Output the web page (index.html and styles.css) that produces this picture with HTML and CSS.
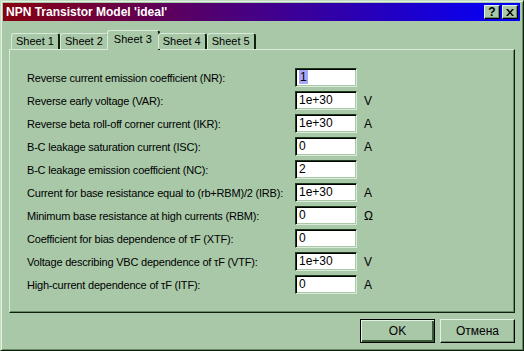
FILE: index.html
```html
<!DOCTYPE html>
<html lang="en">
<head>
    <meta charset="UTF-8">
    <title>NPN Transistor Model 'ideal'</title>
    <link rel="stylesheet" href="styles.css">
</head>
<body>
    <div class="window">
        <div class="titlebar">
            <span class="title">NPN Transistor Model 'ideal'</span>
            <div class="caption-btns">
                <span class="cbtn">?</span>
                <span class="cbtn">
                    <svg width="8" height="7" viewBox="0 0 8 7"><path d="M0 0h2l2 2.5L6 0h2L5 3.5 8 7H6L4 4.5 2 7H0l3-3.5z" fill="#000"/></svg>
                </span>
            </div>
        </div>

        <div class="content">
            <div class="tabs">
                <div class="tab">Sheet 1</div>
                <div class="tab">Sheet 2</div>
                <div class="tab active">Sheet 3</div>
                <div class="tab">Sheet 4</div>
                <div class="tab">Sheet 5</div>
            </div>

            <div class="panel">
                <div class="form">
                    <label>Reverse current emission coefficient (NR):</label>
                    <div class="field"><span class="sel">1</span></div>
                    <span class="unit"></span>

                    <label>Reverse early voltage (VAR):</label>
                    <div class="field">1e+30</div>
                    <span class="unit">V</span>

                    <label>Reverse beta roll-off corner current (IKR):</label>
                    <div class="field">1e+30</div>
                    <span class="unit">A</span>

                    <label>B-C leakage saturation current (ISC):</label>
                    <div class="field">0</div>
                    <span class="unit">A</span>

                    <label>B-C leakage emission coefficient (NC):</label>
                    <div class="field">2</div>
                    <span class="unit"></span>

                    <label>Current for base resistance equal to (rb+RBM)/2 (IRB):</label>
                    <div class="field">1e+30</div>
                    <span class="unit">A</span>

                    <label>Minimum base resistance at high currents (RBM):</label>
                    <div class="field">0</div>
                    <span class="unit">Ω</span>

                    <label>Coefficient for bias dependence of τF (XTF):</label>
                    <div class="field">0</div>
                    <span class="unit"></span>

                    <label>Voltage describing VBC dependence of τF (VTF):</label>
                    <div class="field">1e+30</div>
                    <span class="unit">V</span>

                    <label>High-current dependence of τF (ITF):</label>
                    <div class="field">0</div>
                    <span class="unit">A</span>
                </div>
            </div>

            <div class="actions">
                <button class="btn default">OK</button>
                <button class="btn">Отмена</button>
            </div>
        </div>
    </div>
</body>
</html>
```

FILE: styles.css
```css
body {
    margin: 0;
    padding: 0;
    background-color: #a8c8a8;
    font-family: "Liberation Sans", Arial, sans-serif;
    font-size: 11px;
    color: #000;
}
.window {
    width: 524px;
    height: 351px;
    box-sizing: border-box;
    background: #a8c8a8;
    border-top: 1px solid #c4dcc4;
    border-left: 1px solid #c4dcc4;
    border-right: 1px solid #0c200c;
    border-bottom: 1px solid #0c200c;
    box-shadow: inset 1px 1px 0 #e4f2e4, inset -1px -1px 0 #6a8a6a;
    padding: 2px 3px 2px 2px;
    display: flex;
    flex-direction: column;
}
.titlebar {
    height: 18px;
    background: linear-gradient(to right, #880010, #0000ff);
    display: flex;
    align-items: center;
    justify-content: space-between;
    padding: 0 2px 0 3px;
}
.title {
    color: #fff;
    font-weight: bold;
    font-size: 12px;
    white-space: nowrap;
}
.caption-btns {
    display: flex;
    gap: 2px;
}
.cbtn {
    width: 16px;
    height: 14px;
    box-sizing: border-box;
    background: #a8c8a8;
    border-top: 1px solid #e4f2e4;
    border-left: 1px solid #e4f2e4;
    border-right: 1px solid #000;
    border-bottom: 1px solid #000;
    box-shadow: inset -1px -1px 0 #6a8a6a;
    display: flex;
    align-items: center;
    justify-content: center;
    font-weight: bold;
    font-size: 12px;
    line-height: 1;
}
.content {
    flex: 1;
    padding: 9px 5px 0 6px;
    display: flex;
    flex-direction: column;
}
.tabs {
    display: flex;
    align-items: flex-end;
    height: 19px;
    padding-left: 2px;
    position: relative;
    z-index: 1;
}
.tab {
    height: 16px;
    padding: 0 4px;
    box-sizing: border-box;
    border-top: 1px solid #d8ead8;
    border-left: 1px solid #d8ead8;
    border-right: 2px solid #0c200c;
    border-radius: 3px 3px 0 0;
    line-height: 15px;
    background: #a8c8a8;
}
.tab.active {
    height: 20px;
    margin: 0 -2px -1px -2px;
    padding: 0 6px;
    line-height: 17px;
}
.panel {
    height: 264px;
    box-sizing: border-box;
    border-top: 1px solid #d8ead8;
    border-left: 1px solid #d8ead8;
    border-right: 1px solid #0c200c;
    border-bottom: 1px solid #0c200c;
    box-shadow: inset -1px -1px 0 #6a8a6a;
    padding: 16px 0 0 17px;
}
.form {
    display: grid;
    grid-template-columns: 268px 62px auto;
    grid-auto-rows: 23px;
    align-items: center;
}
.form label {
    white-space: nowrap;
    letter-spacing: -0.2px;
}
.field {
    height: 19px;
    box-sizing: border-box;
    background: #fff;
    border-top: 1px solid #1c3a1c;
    border-left: 1px solid #1c3a1c;
    border-right: 1px solid #d8ead8;
    border-bottom: 1px solid #d8ead8;
    box-shadow: inset 1px 1px 0 #000, inset -1px -1px 0 #a8c8a8;
    padding: 0 3px;
    line-height: 17px;
    font-size: 12px;
}
.sel {
    background: #a8a8f8;
    padding: 0 1px;
}
.unit {
    padding-left: 7px;
    font-size: 12px;
}
.actions {
    display: flex;
    justify-content: flex-end;
    gap: 5px;
    padding-top: 6px;
}
.btn {
    width: 75px;
    height: 24px;
    font-family: "Liberation Sans", Arial, sans-serif;
    font-size: 12px;
    color: #000;
    background: #a8c8a8;
    border-top: 1px solid #e4f2e4;
    border-left: 1px solid #e4f2e4;
    border-right: 1px solid #000;
    border-bottom: 1px solid #000;
    box-shadow: inset -1px -1px 0 #6a8a6a;
    padding: 0;
}
.btn.default {
    border: 1px solid #000;
    box-shadow: inset 1px 1px 0 #e4f2e4, inset -2px -2px 0 #3a5a3a;
}
```
